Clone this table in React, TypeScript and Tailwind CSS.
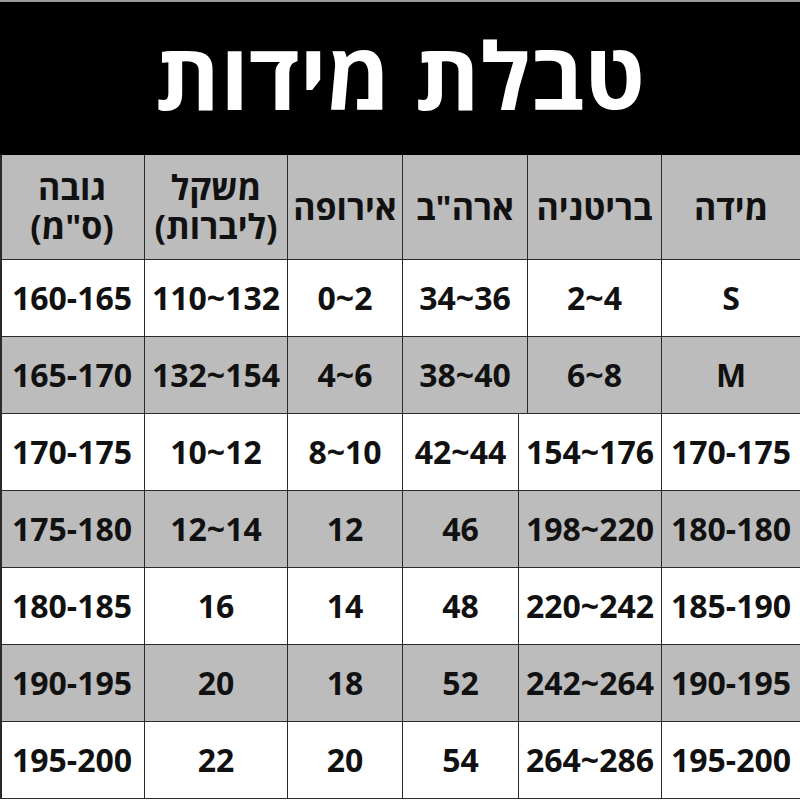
const font = { fontFamily: '"Open Sans", "DejaVu Sans", sans-serif' };

type Row = { cells: string[]; gray: boolean; wide: boolean };

const rows: Row[] = [
  { cells: ["S", "2~4", "34~36", "0~2", "110~132", "160-165"], gray: false, wide: false },
  { cells: ["M", "6~8", "38~40", "4~6", "132~154", "165-170"], gray: true, wide: false },
  { cells: ["170-175", "154~176", "42~44", "8~10", "10~12", "170-175"], gray: false, wide: true },
  { cells: ["180-180", "198~220", "46", "12", "12~14", "175-180"], gray: true, wide: true },
  { cells: ["185-190", "220~242", "48", "14", "16", "180-185"], gray: false, wide: true },
  { cells: ["190-195", "242~264", "52", "18", "20", "190-195"], gray: true, wide: true },
  { cells: ["195-200", "264~286", "54", "20", "22", "195-200"], gray: false, wide: true },
];

function Cell({ children, last }: { children: React.ReactNode; last?: boolean }) {
  return (
    <div
      className={
        "flex items-center justify-center text-center " +
        (last ? "" : "border-l-[1.5px] border-[#2a2a2a]")
      }
    >
      {children}
    </div>
  );
}

export default function App() {
  return (
    <div className="w-[800px] h-[800px] overflow-hidden bg-white text-[#111]" style={font}>
      <div className="h-[155px] bg-black border-t-2 border-[#9a9a9a] flex items-center justify-center">
        <h1 dir="rtl" className="text-white text-[93px] font-bold leading-none -mt-[8px]">
          טבלת מידות
        </h1>
      </div>

      <div className="border-l-2 border-[#2a2a2a]">
        <div
          dir="rtl"
          className="grid grid-cols-[139px_134px_125px_115px_143px_144px] h-[105px] bg-[#bcbcbc] border-b-[1.5px] border-[#2a2a2a] font-bold"
        >
          <Cell><span className="text-[34px]">מידה</span></Cell>
          <Cell><span className="text-[34px]">בריטניה</span></Cell>
          <Cell><span className="text-[34px]">ארה"ב</span></Cell>
          <Cell><span className="text-[34px]">אירופה</span></Cell>
          <Cell>
            <div className="flex flex-col text-[34px]">
              <div className="leading-[39px] h-[39px]">משקל</div>
              <div className="leading-[39px] h-[39px]">(ליברות)</div>
            </div>
          </Cell>
          <Cell last>
            <div className="flex flex-col text-[34px]">
              <div className="leading-[39px] h-[39px]">גובה</div>
              <div className="leading-[39px] h-[39px]">(ס"מ)</div>
            </div>
          </Cell>
        </div>

        {rows.map((r, i) => (
          <div
            key={i}
            dir="rtl"
            className={
              "grid h-[77px] border-b-[1.5px] border-[#2a2a2a] font-bold text-[32px] " +
              (r.wide
                ? "grid-cols-[139px_143px_116px_115px_143px_144px] "
                : "grid-cols-[139px_134px_125px_115px_143px_144px] ") +
              (r.gray ? "bg-[#bcbcbc]" : "bg-white")
            }
          >
            {r.cells.map((c, j) => (
              <Cell key={j} last={j === 5}>
                <span dir="ltr">{c}</span>
              </Cell>
            ))}
          </div>
        ))}
      </div>
    </div>
  );
}
